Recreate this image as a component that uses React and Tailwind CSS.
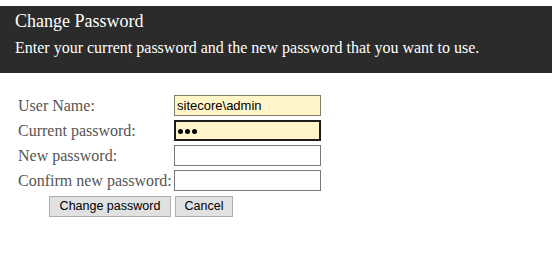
import React from "react";

const serif = { fontFamily: '"Liberation Serif", "Times New Roman", serif' };
const sans = { fontFamily: '"Liberation Sans", Arial, sans-serif' };

function Label({ children }) {
  return (
    <div className="h-[21px] flex items-center text-[16px] leading-[21px] text-[#555555] whitespace-nowrap" style={serif}>
      {children}
    </div>
  );
}

export default function App() {
  return (
    <div className="w-[553px] h-[265px] bg-white overflow-hidden">
      <div className="mt-[6px] h-[67px] w-[552px] bg-[#2b2b2b] pl-[15px] pt-[5px] text-white" style={serif}>
        <div className="text-[18px] leading-[20px]">Change Password</div>
        <div className="mt-[7px] text-[16px] leading-[20px]">
          Enter your current password and the new password that you want to use.
        </div>
      </div>

      <div className="pl-[18px] pt-[22px]">
        <div className="grid grid-cols-[156px_147px] gap-y-[4px]">
          <Label>User Name:</Label>
          <div className="h-[21px] border border-[#857d66] bg-[#fff5c8] flex items-center pl-[2px] text-[13px] text-black" style={sans}>
            sitecore\admin
          </div>

          <Label>Current password:</Label>
          <div className="h-[21px] border-2 border-[#1c1c1c] bg-[#fff5c8] flex items-center pl-[2px] gap-[2px] pt-[1px]">
            <span className="w-[5px] h-[5px] rounded-full bg-black" />
            <span className="w-[5px] h-[5px] rounded-full bg-black" />
            <span className="w-[5px] h-[5px] rounded-full bg-black" />
          </div>

          <Label>New password:</Label>
          <div className="h-[21px] border border-[#7a7a7a] bg-white" />

          <Label>Confirm new password:</Label>
          <div className="h-[21px] border border-[#7a7a7a] bg-white" />
        </div>

        <div className="flex gap-[4px] pl-[31px] mt-[5px]" style={sans}>
          <div className="w-[122px] h-[21px] border border-[#adadad] bg-[#e1e1e1] flex items-center justify-center text-[12.5px] text-black">
            Change password
          </div>
          <div className="w-[58px] h-[21px] border border-[#adadad] bg-[#e1e1e1] flex items-center justify-center text-[12.5px] text-black">
            Cancel
          </div>
        </div>
      </div>
    </div>
  );
}
